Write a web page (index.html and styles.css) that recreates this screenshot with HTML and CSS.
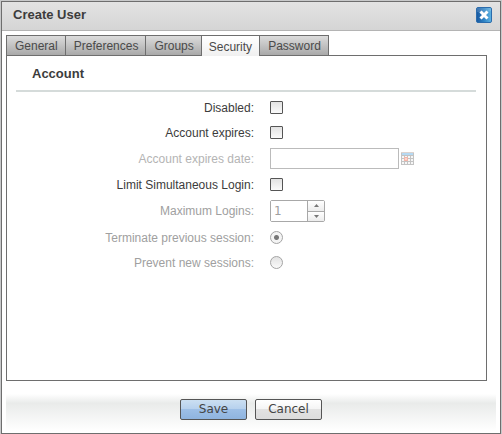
FILE: index.html
```html
<!DOCTYPE html>
<html lang="en">
<head>
<meta charset="utf-8">
<title>Create User</title>
<link rel="stylesheet" href="styles.css">
</head>
<body>
<main class="dialog">
  <header class="titlebar">
    <h1 class="title">Create User</h1>
    <button class="close" type="button" aria-label="Close">
      <svg width="16" height="16" viewBox="0 0 16 16">
        <defs>
          <linearGradient id="blue" x1="0" y1="0" x2="1" y2="0">
            <stop offset="0" stop-color="#1757a0"/>
            <stop offset=".5" stop-color="#2f83c4"/>
            <stop offset="1" stop-color="#5fb4e4"/>
          </linearGradient>
        </defs>
        <rect x=".5" y=".5" width="15" height="15" rx="1.5" fill="url(#blue)" stroke="#2b6cac"/>
        <path d="M1 1h14v3Q8 7 1 5z" fill="#fff" opacity=".15"/>
        <path d="M4.5 4.5l7 7M11.500 4.500l-7 7" stroke="#fff" stroke-width="3"/>
      </svg>
    </button>
  </header>
  <div class="content">
    <nav class="tabs" role="tablist">
      <button class="tab" type="button" role="tab">General</button>
      <button class="tab" type="button" role="tab">Preferences</button>
      <button class="tab" type="button" role="tab">Groups</button>
      <button class="tab active" type="button" role="tab" aria-selected="true">Security</button>
      <button class="tab" type="button" role="tab">Password</button>
    </nav>
    <section class="panel">
      <h2 class="section-title">Account</h2>
      <form class="form" id="user">
        <div class="row">
          <label for="disabled">Disabled:</label>
          <input class="check" type="checkbox" id="disabled">
        </div>
        <div class="row">
          <label for="expires">Account expires:</label>
          <input class="check" type="checkbox" id="expires">
        </div>
        <div class="row faint">
          <label for="date">Account expires date:</label>
          <div class="date">
            <input class="text" type="text" id="date" disabled>
            <svg class="calendar" width="13" height="13" viewBox="0 0 13 13">
              <path d="M0 0h13v13H0z" fill="#c3c3c3"/>
              <path d="M0 0h13v1H0z" fill="#dcd3cf"/>
              <path d="M1 1h11v2H1z" fill="#b5d9f3"/>
              <path d="M1 4h2v2H1zM4 4h2v2H4zM7 4h2v2H7zM10 4h2v2h-2zM1 7h2v2H1zM7 7h2v2H7zM10 7h2v2h-2zM1 10h2v2H1zM4 10h2v2H4zM7 10h2v2H7zM10 10h2v2h-2z" fill="#f6f6f6"/>
              <path d="M3 5h4v4H3z" fill="#f4b5a8"/>
              <path d="M4 6h2v2H4z" fill="#fbd5cc"/>
            </svg>
          </div>
        </div>
        <div class="row">
          <label for="limit">Limit Simultaneous Login:</label>
          <input class="check" type="checkbox" id="limit">
        </div>
        <div class="row muted">
          <label for="max">Maximum Logins:</label>
          <div class="spinner">
            <input class="number" type="text" id="max" value="1" disabled>
            <div class="steps">
              <button class="step" type="button" aria-label="Increase" disabled><svg width="5" height="3" viewBox="0 0 5 3"><path d="M0 3L2.5 0L5 3z" fill="#777"/></svg></button>
              <button class="step" type="button" aria-label="Decrease" disabled><svg width="5" height="3" viewBox="0 0 5 3"><path d="M0 0L2.5 3L5 0z" fill="#777"/></svg></button>
            </div>
          </div>
        </div>
        <div class="row muted">
          <label for="terminate">Terminate previous session:</label>
          <input class="radio" type="radio" name="session" id="terminate" checked disabled>
        </div>
        <div class="row muted">
          <label for="prevent">Prevent new sessions:</label>
          <input class="radio" type="radio" name="session" id="prevent" disabled>
        </div>
      </form>
    </section>
    <footer class="actions">
      <button class="button primary" type="submit" form="user">Save</button>
      <button class="button" type="button">Cancel</button>
    </footer>
  </div>
</main>
</body>
</html>
```
FILE: styles.css
```css
* {
  box-sizing: border-box;
}

body {
  margin: 0;
  background: #c8c9ca;
  color: #3c3c3c;
  font: 12px/16px "Liberation Sans", Arial, sans-serif;
}

button,
input {
  margin: 0;
  padding: 0;
  font: inherit;
  color: inherit;
}

h1,
h2 {
  margin: 0;
  font-size: 13px;
}

.dialog {
  display: flex;
  flex-direction: column;
  min-height: calc(100vh - 1px);
  margin: 1px 1px 0;
  border: 1px solid #6e6e6e;
  background: #fff;
}

.titlebar {
  display: flex;
  align-items: center;
  justify-content: space-between;
  height: 29px;
  padding: 0 8px 2px 11px;
  border-bottom: 1px solid #b4b4b4;
  background: linear-gradient(#e3e3e3, #d5d5d5);
}

.close {
  display: flex;
  border: 0;
  background: none;
}

.content {
  display: flex;
  flex: 1;
  flex-direction: column;
  padding: 4px 4px 2px;
}

.tabs {
  display: flex;
}

.tab {
  height: 20px;
  padding: 0 7px 0 8px;
  border: 1px solid #6e6e6e;
  border-width: 1px 1px 0 0;
  background: linear-gradient(#dcdcdc, #a9a9a9);
  color: #4a4a4a;
}

.tab:first-child {
  border-left-width: 1px;
}

.tab.active {
  position: relative;
  height: 21px;
  margin-bottom: -1px;
  padding: 1px 7px 0;
  background: linear-gradient(#fff, #f0f0f0);
}

.panel {
  flex: 1;
  margin-right: 9px;
  padding: 10px 10px 0 9px;
  border: 1px solid #6e6e6e;
}

.section-title {
  height: 26px;
  padding-left: 16px;
  border-bottom: 2px solid #d5dbda;
}

.form {
  display: grid;
  gap: 6px;
  padding-top: 6px;
}

.row {
  display: grid;
  grid-template-columns: 238px 1fr;
  column-gap: 16px;
  align-items: center;
  min-height: 19px;
}

.row label {
  text-align: right;
}

.faint {
  color: #b4b4b4;
}

.muted {
  color: #a0a0a0;
}

.check,
.radio {
  appearance: none;
  width: 13px;
  height: 13px;
  border: 1px solid #555;
  border-radius: 1px;
  background: linear-gradient(#e2e2e2, #fafafa);
}

.radio {
  border-color: #a4a4a4;
  border-radius: 50%;
}

.radio:checked {
  background: radial-gradient(circle, #777 2px, #f4f4f4 3px);
}

.date {
  display: flex;
  align-items: center;
  gap: 2px;
}

.text {
  width: 129px;
  height: 21px;
  border: 1px solid #bbb;
  background: #fff;
}

.spinner {
  display: flex;
  width: 55px;
  height: 22px;
  border: 1px solid #a8a8a8;
  border-radius: 2px;
}

.number {
  width: 36px;
  padding-left: 3px;
  border: 0;
  background: #fff;
  font-family: "DejaVu Sans", sans-serif;
}

.steps {
  display: grid;
  flex: 1;
  border-left: 1px solid #a8a8a8;
}

.step {
  display: flex;
  align-items: center;
  justify-content: center;
  border: 0;
  background: linear-gradient(#fff, #ececec);
}

.step + .step {
  border-top: 1px solid #a8a8a8;
}

.actions {
  display: flex;
  justify-content: center;
  gap: 8px;
  height: 37px;
  margin-top: 13px;
  padding-top: 5px;
  background: linear-gradient(#fff, #e9ebea 25%, #fff);
}

.button {
  width: 67px;
  height: 21px;
  padding-bottom: 2px;
  border: 1px solid #555;
  border-radius: 2px;
  background: linear-gradient(#fff, #f4f4f4 50%, #e2e2e2 50%, #dcdcdc);
  color: #444;
  font-family: "DejaVu Sans", sans-serif;
}

.primary {
  background: linear-gradient(#cbdff2, #b5d0ed 50%, #9dbfe6 50%, #8fb4df);
}
```
